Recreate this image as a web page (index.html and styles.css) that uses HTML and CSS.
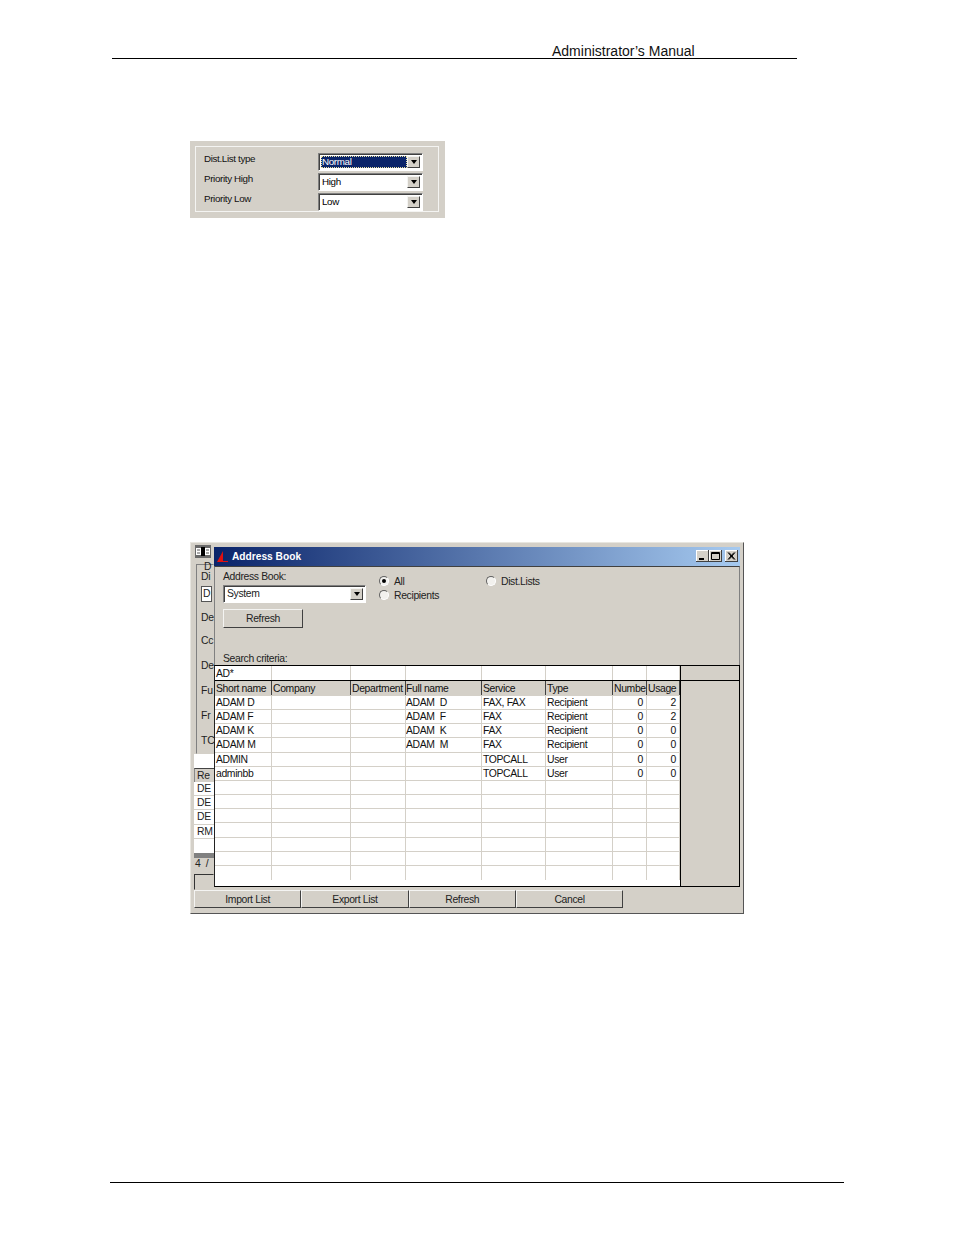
FILE: index.html
```html
<!DOCTYPE html>
<html lang="en">
<head>
<meta charset="utf-8">
<title>Administrator's Manual</title>
<link rel="stylesheet" href="styles.css">
</head>
<body>
<div class="page">
  <header class="doc-header"><span>Administrator’s Manual</span></header>

  <section class="list-panel">
    <div class="groove">
      <div class="prop"><span class="prop-label">Dist.List type</span>
        <div class="combo small focus"><span class="combo-text"><span>Normal</span></span><span class="drop"><i></i></span></div></div>
      <div class="prop"><span class="prop-label">Priority High</span>
        <div class="combo small"><span class="combo-text"><span>High</span></span><span class="drop"><i></i></span></div></div>
      <div class="prop"><span class="prop-label">Priority Low</span>
        <div class="combo small"><span class="combo-text"><span>Low</span></span><span class="drop"><i></i></span></div></div>
    </div>
  </section>

  <section class="window">
    <div class="behind">
      <div class="back-icon"><svg width="16" height="13" viewBox="0 0 16 13"><rect width="16" height="13" fill="#6a6a6a"/><path d="M1 3h6v7H1zM9 3h6v7H9z" fill="#fff"/><path d="M6 2h4v9H6z" fill="#000"/><path d="M2 5h3M11 5h3M2 8h3M11 8h3" stroke="#555"/></svg></div>
      <div class="b-group">
        <span class="b-l l1">D</span><span class="b-l">Di</span>
        <span class="b-input">D</span>
        <span class="b-l l3">De</span><span class="b-l l4">Cc</span><span class="b-l l5">De</span>
        <span class="b-l l5">Fu</span><span class="b-l l5">Fr</span><span class="b-l l5">TC</span>
      </div>
      <div class="b-list">
        <div class="b-blank"></div>
        <div class="b-head">Re</div>
        <div class="b-row">DE</div><div class="b-row">DE</div><div class="b-row">DE</div><div class="b-row">RM</div>
        <div class="b-fill"></div>
      </div>
      <div class="b-scroll"></div>
      <div class="b-count">4 /</div>
      <div class="b-box"></div>
    </div>

    <div class="dialog">
      <div class="titlebar">
        <svg class="sail" width="15" height="15" viewBox="0 0 15 15"><path d="M7 2L1 13H12V12H7Z" fill="#e01010"/></svg>
        <span class="title">Address Book</span>
        <span class="caps">
          <span class="cap"><svg width="13" height="12" viewBox="0 0 13 12"><path d="M3 8H8V10H3Z" fill="#000"/></svg></span>
          <span class="cap"><svg width="13" height="12" viewBox="0 0 13 12"><path d="M2.500 2.500H10.500V9.500H2.500ZM2.500 3.500H10.500" fill="none" stroke="#000"/></svg></span>
          <span class="cap gap"><svg width="13" height="12" viewBox="0 0 13 12"><path d="M3 2.500L9 9.500M4 2.500L10 9.500M9 2.500L3 9.500M10 2.500L4 9.500" fill="none" stroke="#000"/></svg></span>
        </span>
      </div>

      <div class="form">
        <div class="form-top">
          <div class="col-book">
            <label class="lbl">Address Book:</label>
            <div class="combo wide"><span class="combo-text"><span>System</span></span><span class="drop"><i></i></span></div>
            <button class="refresh" type="button">Refresh</button>
          </div>
          <div class="col-radio">
            <div class="radio-row"><span class="radio on"></span><span>All</span></div>
            <div class="radio-row"><span class="radio"></span><span>Recipients</span></div>
          </div>
          <div class="col-radio">
            <div class="radio-row"><span class="radio"></span><span>Dist.Lists</span></div>
          </div>
        </div>
        <div class="search-label">Search criteria:</div>
      </div>

      <div class="grid-wrap">
        <div class="grid">
          <div class="row search"><b>AD*</b><b></b><b></b><b></b><b></b><b></b><b></b><b></b></div>
          <div class="row head"><b>Short name</b><b>Company</b><b>Department</b><b>Full name</b><b>Service</b><b>Type</b><b>Numbe</b><b>Usage</b></div>
          <div class="row"><b>ADAM D</b><b></b><b></b><b>ADAM&nbsp; D</b><b>FAX, FAX</b><b>Recipient</b><b class="num">0</b><b class="num">2</b></div>
          <div class="row"><b>ADAM F</b><b></b><b></b><b>ADAM&nbsp; F</b><b>FAX</b><b>Recipient</b><b class="num">0</b><b class="num">2</b></div>
          <div class="row"><b>ADAM K</b><b></b><b></b><b>ADAM&nbsp; K</b><b>FAX</b><b>Recipient</b><b class="num">0</b><b class="num">0</b></div>
          <div class="row"><b>ADAM M</b><b></b><b></b><b>ADAM&nbsp; M</b><b>FAX</b><b>Recipient</b><b class="num">0</b><b class="num">0</b></div>
          <div class="row"><b>ADMIN</b><b></b><b></b><b></b><b>TOPCALL</b><b>User</b><b class="num">0</b><b class="num">0</b></div>
          <div class="row"><b>adminbb</b><b></b><b></b><b></b><b>TOPCALL</b><b>User</b><b class="num">0</b><b class="num">0</b></div>
          <div class="row"><b></b><b></b><b></b><b></b><b></b><b></b><b></b><b></b></div>
          <div class="row"><b></b><b></b><b></b><b></b><b></b><b></b><b></b><b></b></div>
          <div class="row"><b></b><b></b><b></b><b></b><b></b><b></b><b></b><b></b></div>
          <div class="row"><b></b><b></b><b></b><b></b><b></b><b></b><b></b><b></b></div>
          <div class="row"><b></b><b></b><b></b><b></b><b></b><b></b><b></b><b></b></div>
          <div class="row"><b></b><b></b><b></b><b></b><b></b><b></b><b></b><b></b></div>
          <div class="row last"><b></b><b></b><b></b><b></b><b></b><b></b><b></b><b></b></div>
        </div>
        <div class="grid-side"><div class="side-top"></div></div>
      </div>
    </div>

    <div class="foot-buttons">
      <button type="button">Import List</button>
      <button type="button">Export List</button>
      <button type="button">Refresh</button>
      <button type="button">Cancel</button>
    </div>
  </section>

  <footer class="doc-footer"></footer>
</div>
</body>
</html>
```
FILE: styles.css
```css
* { box-sizing: border-box; }
html, body { margin: 0; padding: 0; background: #fff; }
.page { width: 954px; height: 1235px; overflow: hidden; font-family: "Liberation Sans", Arial, sans-serif; color: #000; }

.doc-header { margin: 44px 0 0 112px; width: 685px; height: 15px; border-bottom: 1px solid #000; padding-left: 440px; font-size: 14px; line-height: 15px; white-space: nowrap; color: #111; }

.list-panel { margin: 82px 0 0 190px; width: 255px; height: 77px; background: #d4d0c8; padding: 5px 6px 6px 5px; }
.groove { height: 66px; border: 1px solid #f4f4f2; padding: 6px 15px 0 8px; display: flex; flex-direction: column; gap: 2px; }
.prop { display: flex; justify-content: space-between; height: 18px; }
.prop-label { font-size: 9.800px; letter-spacing: -0.350px; line-height: 12px; color: #111; }

.combo { display: flex; background: #fff; border: 1px solid; border-color: #808080 #fff #fff #808080; box-shadow: inset 1px 1px 0 #404040; }
.combo.small { width: 105px; height: 18px; padding: 2px; }
.combo.wide { width: 143px; height: 18px; padding: 2px; margin-top: 2px; }
.combo-text { flex: 1; font-size: 9.800px; letter-spacing: -0.350px; line-height: 12px; padding-left: 1px; min-width: 0; }
.combo.wide .combo-text { font-size: 10.400px; letter-spacing: -0.350px; padding-left: 1px; }
.combo.focus .combo-text { background: #0a246a; color: #fff; outline: 1px dotted #e8e0a0; outline-offset: -1px; }
.drop { width: 13px; background: #d4d0c8; border: 1px solid; border-color: #f4f4f2 #404040 #404040 #f4f4f2; display: flex; align-items: center; justify-content: center; }
.drop i { width: 0; height: 0; border: 3.500px solid transparent; border-top: 4px solid #000; border-bottom: 0; }

.window { margin: 324px 0 0 190px; width: 554px; height: 372px; background: #d4d0c8; border: 1px solid; border-color: #e8e6e0 #555 #555 #e8e6e0; position: relative; }

.behind { width: 23px; padding: 2px 0 0 2px; font-size: 10.400px; letter-spacing: -0.200px; color: #222; overflow: hidden; height: 347px; }
.back-icon { width: 16px; height: 13px; line-height: 0; margin-left: 2px; }
.b-group { margin: 6px 0 0 3px; height: 190px; border: 1px solid; border-color: #808080 transparent transparent #808080; padding-left: 4px; }
.b-l { display: block; line-height: 10px; white-space: nowrap; }
.l1 { margin: -3px 0 0 3px; }
.b-input { display: block; width: 11px; height: 16px; margin-top: 4px; background: #fff; border: 1px solid #555; line-height: 14px; padding-left: 1px; overflow: hidden; }
.l3 { margin-top: 11px; } .l4 { margin-top: 13px; } .l5 { margin-top: 15px; }
.b-list { margin-left: 1px; }
.b-blank { height: 14px; background: #fff; }
.b-head { height: 14px; border-top: 1px solid #444; border-left: 1px solid #888; line-height: 13px; padding-left: 2px; }
.b-row { height: 14.200px; background: #fff; border-bottom: 1px solid #d4d0c8; line-height: 13px; padding-left: 3px; }
.b-fill { height: 14px; background: #fff; }
.b-scroll { height: 5px; background: #808080; margin-left: 1px; }
.b-count { line-height: 12px; margin-left: 2px; letter-spacing: 1px; white-space: nowrap; }
.b-box { height: 16px; margin: 4px 0 0 1px; border: 1px solid; border-color: #333 transparent transparent #333; }

.dialog { position: absolute; left: 23px; top: 4px; width: 526px; height: 340px; background: #d4d0c8; display: flex; flex-direction: column; }
.titlebar { height: 19px; padding: 0 0 1px 2px; background: linear-gradient(90deg, #0a246a, #a6caf0); display: flex; align-items: center; flex: none; }
.sail { flex: none; }
.title { color: #fff; font-weight: 700; font-size: 10.200px; margin-left: 1px; }
.caps { margin-left: auto; display: flex; padding-right: 2px; }
.cap { width: 13px; height: 12px; background: #d4d0c8; border-right: 1px solid #404040; border-bottom: 1px solid #404040; box-shadow: inset 1px 1px 0 #fff; line-height: 0; }
.cap svg { display: block; }
.cap.gap { margin-left: 3px; }

.form { height: 99px; border-top: 1px solid #404040; border-left: 1px solid #808080; border-right: 1px solid #808080; padding: 4px 0 0 8px; font-size: 10.400px; letter-spacing: -0.350px; color: #222; flex: none; }
.form-top { display: flex; height: 82px; }
.col-book { width: 156px; }
.lbl { display: block; line-height: 12px; }
.refresh { display: block; margin-top: 6px; width: 80px; height: 19px; padding: 0; font: inherit; letter-spacing: inherit; color: inherit; background: #d4d0c8; border: 1px solid; border-color: #f4f4f2 #404040 #404040 #f4f4f2; }
.col-radio { width: 107px; padding-top: 3px; }
.radio-row { display: flex; align-items: center; gap: 5px; height: 14px; }
.radio { width: 10px; height: 10px; border-radius: 50%; border: 1px solid; border-color: #606060 #fff #fff #606060; background: #f2f1ee; display: flex; align-items: center; justify-content: center; }
.radio.on::after { content: ""; width: 4px; height: 4px; border-radius: 50%; background: #000; }
.search-label { line-height: 12px; }

.grid-wrap { flex: 1; display: flex; border: 1px solid #000; border-left-color: #222; min-height: 0; }
.grid { width: 465px; background: #fff; overflow: hidden; }
.row { height: 14.160px; display: grid; grid-template-columns: 57px 79px 55px 76px 64px 67px 34px 33px; border-bottom: 1px solid #d4d0c8; font-size: 10.400px; letter-spacing: -0.350px; line-height: 13px; color: #111; }
.row b { font-weight: 400; border-right: 1px solid #d4d0c8; padding-left: 1px; overflow: hidden; white-space: nowrap; }
.row b:nth-child(4) { padding-left: 0; }
.row .num { text-align: right; padding-right: 3px; }
.row.search { height: 15px; border-bottom-color: #000; line-height: 15px; }
.row.head { height: 15px; background: #d4d0c8; border-bottom-color: #d4d0c8; line-height: 15px; }
.row.head b { border-right-color: #404040; }
.row.last { border-bottom: 0; }
.grid-side { flex: 1; border-left: 1px solid #000; }
.side-top { height: 15px; border-bottom: 1px solid #000; }

.foot-buttons { position: absolute; left: 3px; top: 347px; display: flex; }
.foot-buttons button { width: 107.300px; height: 18px; padding: 0; font-family: inherit; font-size: 10.400px; letter-spacing: -0.350px; color: #222; background: #d4d0c8; border: 1px solid; border-color: #f4f4f2 #404040 #404040 #f4f4f2; }

.doc-footer { margin: 268px 0 0 110px; width: 734px; height: 1px; background: #000; }
```
